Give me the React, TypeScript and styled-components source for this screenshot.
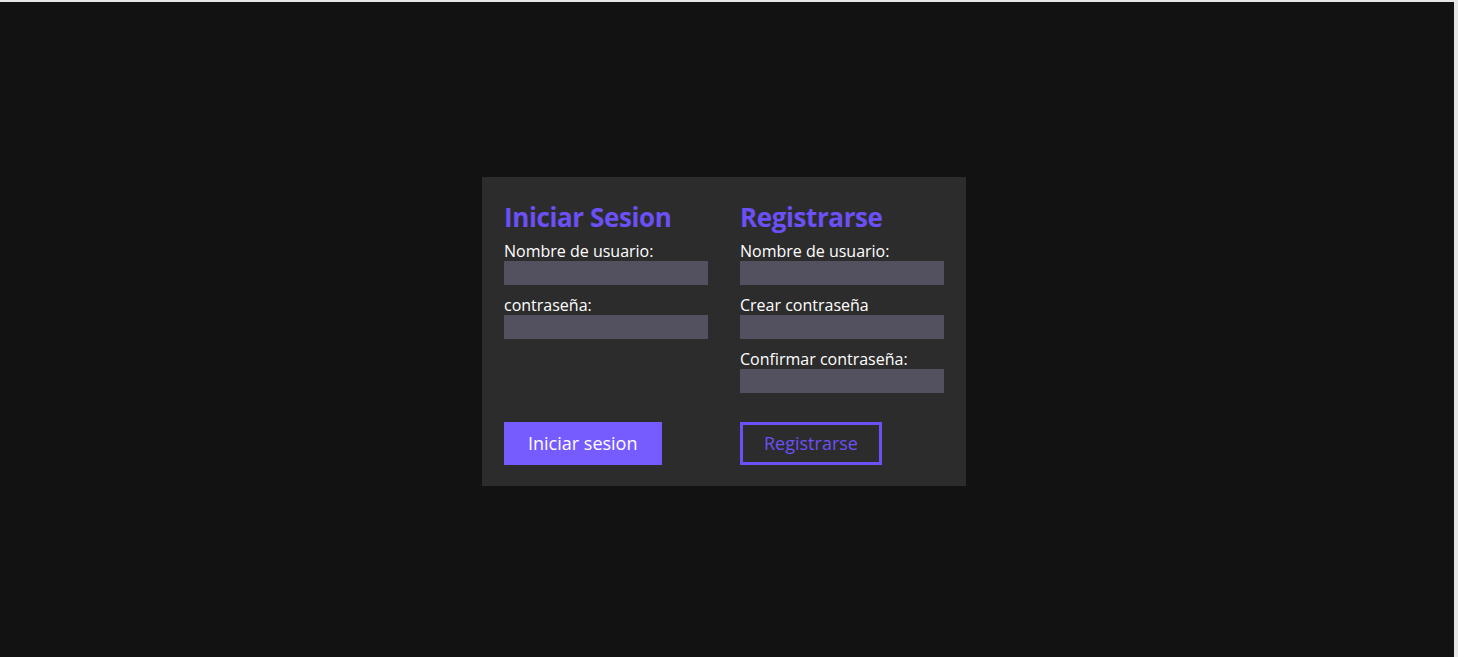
import React from 'react';
import styled, { createGlobalStyle } from 'styled-components';

const GlobalStyle = createGlobalStyle`
  html, body {
    margin: 0;
    padding: 0;
    background: #e6e6e6;
  }
  * {
    box-sizing: border-box;
  }
`;

const Page = styled.div`
  margin-top: 2px;
  width: 1454px;
  height: 655px;
  background: #121212;
  display: flex;
  align-items: center;
  justify-content: center;
  padding: 0 6px 0 0;
  font-family: "Open Sans", "Noto Sans", sans-serif;
`;

const Card = styled.div`
  background: #2c2c2c;
  display: flex;
  gap: 32px;
  padding: 24px 22px 21px 22px;
  margin-top: 3px;
`;

const Column = styled.div`
  width: 204px;
  display: flex;
  flex-direction: column;
`;

const Title = styled.h2`
  margin: 0 0 8px;
  font-size: 26px;
  line-height: 32px;
  font-weight: 700;
  color: #6b50f6;
  letter-spacing: -0.4px;
`;

const Fields = styled.div`
  display: flex;
  flex-direction: column;
  gap: 10px;
  margin-bottom: 29px;
`;

const Field = styled.label`
  display: flex;
  flex-direction: column;
  color: #ffffff;
  font-size: 16px;
  line-height: 20px;
`;

const Input = styled.input`
  height: 24px;
  width: 100%;
  border: none;
  outline: none;
  background: #535160;
  color: #fff;
  margin: 0;
  padding: 0 6px;
`;

const Button = styled.button<{ $outline?: boolean }>`
  margin-top: auto;
  align-self: flex-start;
  height: 43px;
  padding: 0 ${p => (p.$outline ? '21px' : '24px')};
  font-family: inherit;
  font-size: 18px;
  cursor: pointer;
  background: ${p => (p.$outline ? 'transparent' : '#765cff')};
  color: ${p => (p.$outline ? '#6b50f6' : '#ffffff')};
  border: ${p => (p.$outline ? '3px solid #6b50f6' : 'none')};
`;

export default function App() {
  return (
    <>
      <GlobalStyle />
      <Page>
        <Card>
          <Column>
            <Title>Iniciar Sesion</Title>
            <Fields>
              <Field>
                Nombre de usuario:
                <Input type="text" />
              </Field>
              <Field>
                contraseña:
                <Input type="password" />
              </Field>
            </Fields>
            <Button>Iniciar sesion</Button>
          </Column>
          <Column>
            <Title>Registrarse</Title>
            <Fields>
              <Field>
                Nombre de usuario:
                <Input type="text" />
              </Field>
              <Field>
                Crear contraseña
                <Input type="password" />
              </Field>
              <Field>
                Confirmar contraseña:
                <Input type="password" />
              </Field>
            </Fields>
            <Button $outline>Registrarse</Button>
          </Column>
        </Card>
      </Page>
    </>
  );
}
